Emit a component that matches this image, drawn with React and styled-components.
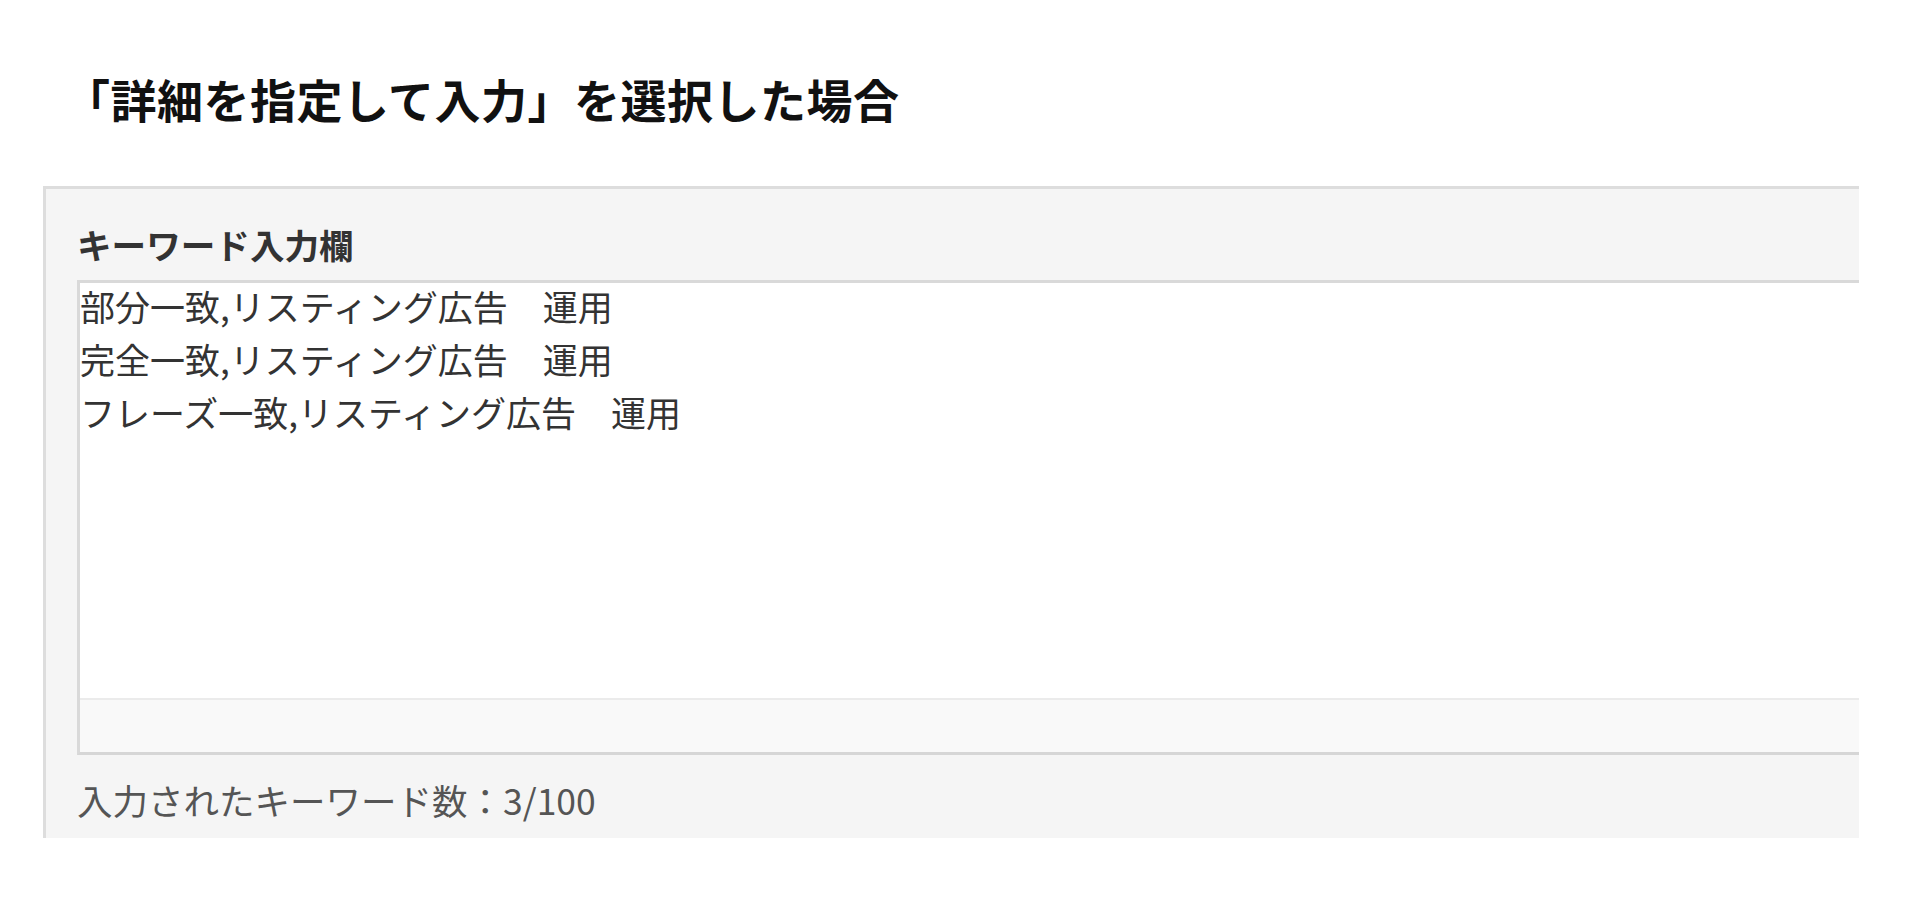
import React from 'react';
import styled, { createGlobalStyle } from 'styled-components';

const keywords = [
  '部分一致,リスティング広告　運用',
  '完全一致,リスティング広告　運用',
  'フレーズ一致,リスティング広告　運用',
];

const GlobalStyle = createGlobalStyle`
  html, body {
    margin: 0;
    padding: 0;
    background: #ffffff;
  }
  body {
    font-family: "Noto Sans CJK JP", "Noto Sans", sans-serif;
    color: #333333;
  }
`;

const Page = styled.div`
  width: 1920px;
  height: 923px;
  overflow: hidden;
  display: flex;
  flex-direction: column;
`;

const Title = styled.h1`
  margin: 66px 0 0 0;
  padding-left: 64px;
  font-size: 46px;
  line-height: 64px;
  font-weight: 700;
  letter-spacing: 0.5px;
  color: #111111;
`;

const Panel = styled.section`
  box-sizing: border-box;
  width: 1816px;
  margin: 56px 0 0 43px;
  padding: 35px 0 18px 31px;
  background: #f5f5f5;
  border-top: 3px solid #dddddd;
  border-left: 3px solid #dddddd;
  display: flex;
  flex-direction: column;
`;

const Label = styled.div`
  font-size: 34.6px;
  line-height: 40px;
  font-weight: 700;
  color: #333333;
`;

const Field = styled.div`
  margin-top: 16px;
  background: #ffffff;
  border-top: 3px solid #d9d9d9;
  border-left: 3px solid #d9d9d9;
  border-bottom: 3px solid #d6d6d6;
  display: flex;
  flex-direction: column;
`;

const Lines = styled.div`
  height: 415px;
  display: flex;
  flex-direction: column;
  gap: 8px;
`;

const Line = styled.div`
  font-size: 35px;
  line-height: 45px;
  color: #333333;
  white-space: pre;
`;

const Strip = styled.div`
  height: 52px;
  background: #f9f9f9;
  border-top: 2px solid #ebebeb;
`;

const Counter = styled.div`
  margin-top: 25px;
  font-size: 35.5px;
  line-height: 40px;
  color: #555555;
`;

export default function App() {
  return (
    <Page>
      <GlobalStyle />
      <Title>「詳細を指定して入力」を選択した場合</Title>
      <Panel>
        <Label>キーワード入力欄</Label>
        <Field>
          <Lines>
            {keywords.map((k) => (
              <Line key={k}>{k}</Line>
            ))}
          </Lines>
          <Strip />
        </Field>
        <Counter>入力されたキーワード数：{keywords.length}/100</Counter>
      </Panel>
    </Page>
  );
}
